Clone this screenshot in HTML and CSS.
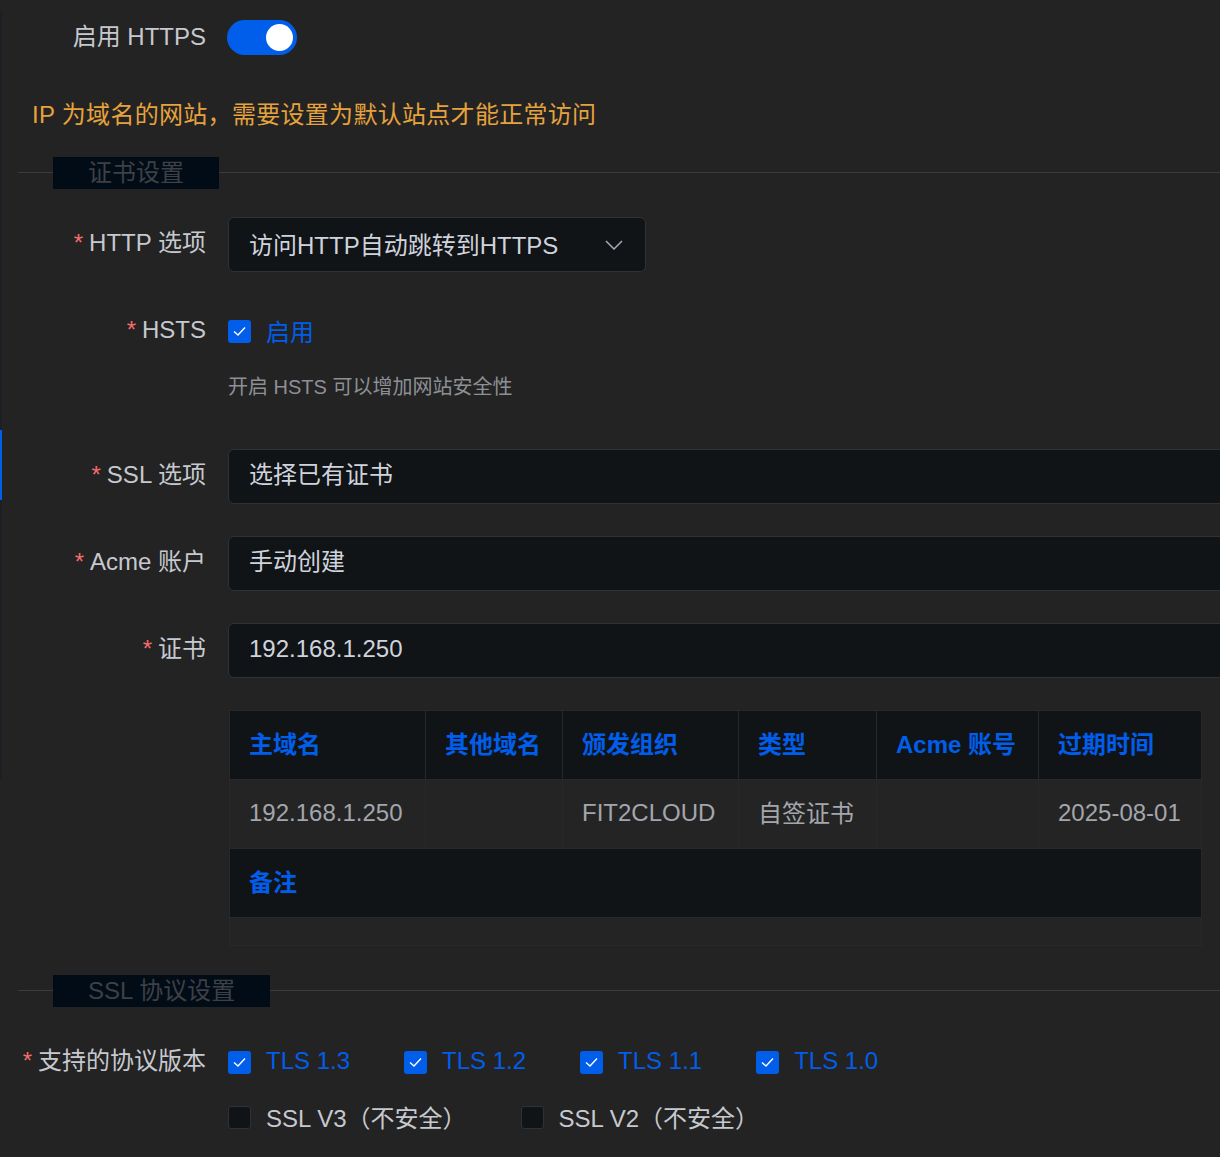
FILE: index.html
```html
<!DOCTYPE html>
<html lang="zh-CN">
<head>
<meta charset="utf-8"/>
<meta content="width=device-width, initial-scale=1.0" name="viewport"/>
<title>HTTPS 设置</title>
<link rel="stylesheet" href="styles.css">
</head>
<body>
<div class="page">
  <div class="rail"><span class="rail-active"></span></div>

  <div class="main">
    <div class="form-item form-item-first">
      <label class="form-label">启用 HTTPS</label>
      <div class="form-content">
        <span class="switch is-on"><span class="switch-knob"></span></span>
      </div>
    </div>

    <p class="warning">IP 为域名的网站，需要设置为默认站点才能正常访问</p>

    <div class="divider"><span class="divider-text">证书设置</span></div>

    <div class="form-item">
      <label class="form-label is-required">HTTP 选项</label>
      <div class="form-content">
        <div class="select">
          <span class="select-value">访问HTTP自动跳转到HTTPS</span>
          <svg class="select-arrow" width="18" height="10" viewBox="0 0 18 10"><path d="M1 1 L9 9 L17 1" fill="none" stroke="#a8abb2" stroke-width="1.5"/></svg>
        </div>
      </div>
    </div>

    <div class="form-item">
      <label class="form-label is-required">HSTS</label>
      <div class="form-content">
        <div class="check-line">
          <span class="checkbox is-checked">
            <svg width="23" height="23" viewBox="0 0 23 23"><path d="M6 11.5 L10 15 L17 7.5" fill="none" stroke="#fff" stroke-width="1.4"/></svg>
          </span>
          <span class="check-label is-checked">启用</span>
        </div>
        <div class="help">开启 HSTS 可以增加网站安全性</div>
      </div>
    </div>

    <div class="form-item">
      <label class="form-label is-required">SSL 选项</label>
      <div class="form-content">
        <div class="input">选择已有证书</div>
      </div>
    </div>

    <div class="form-item">
      <label class="form-label is-required">Acme 账户</label>
      <div class="form-content">
        <div class="input">手动创建</div>
      </div>
    </div>

    <div class="form-item">
      <label class="form-label is-required">证书</label>
      <div class="form-content">
        <div class="input">192.168.1.250</div>
      </div>
    </div>

    <div class="form-item form-item-table">
      <label class="form-label"></label>
      <div class="form-content">
        <table class="cert-table">
          <colgroup>
            <col style="width:196px"><col style="width:137px"><col style="width:176px">
            <col style="width:138px"><col style="width:162px"><col style="width:163px">
          </colgroup>
          <tr class="row-label">
            <th>主域名</th><th>其他域名</th><th>颁发组织</th><th>类型</th><th>Acme 账号</th><th>过期时间</th>
          </tr>
          <tr class="row-value">
            <td>192.168.1.250</td><td></td><td>FIT2CLOUD</td><td class="cell-cjk">自签证书</td><td></td><td>2025-08-01</td>
          </tr>
          <tr class="row-label">
            <th colspan="6">备注</th>
          </tr>
          <tr class="row-empty">
            <td colspan="6"></td>
          </tr>
        </table>
      </div>
    </div>

    <div class="divider"><span class="divider-text">SSL 协议设置</span></div>

    <div class="form-item form-item-auto">
      <label class="form-label is-required">支持的协议版本</label>
      <div class="form-content">
        <div class="check-group">
          <div class="check-line">
            <span class="checkbox is-checked"><svg width="23" height="23" viewBox="0 0 23 23"><path d="M6 11.5 L10 15 L17 7.5" fill="none" stroke="#fff" stroke-width="1.4"/></svg></span>
            <span class="check-label is-checked">TLS 1.3</span>
          </div>
          <div class="check-line">
            <span class="checkbox is-checked"><svg width="23" height="23" viewBox="0 0 23 23"><path d="M6 11.5 L10 15 L17 7.5" fill="none" stroke="#fff" stroke-width="1.4"/></svg></span>
            <span class="check-label is-checked">TLS 1.2</span>
          </div>
          <div class="check-line">
            <span class="checkbox is-checked"><svg width="23" height="23" viewBox="0 0 23 23"><path d="M6 11.5 L10 15 L17 7.5" fill="none" stroke="#fff" stroke-width="1.4"/></svg></span>
            <span class="check-label is-checked">TLS 1.1</span>
          </div>
          <div class="check-line">
            <span class="checkbox is-checked"><svg width="23" height="23" viewBox="0 0 23 23"><path d="M6 11.5 L10 15 L17 7.5" fill="none" stroke="#fff" stroke-width="1.4"/></svg></span>
            <span class="check-label is-checked">TLS 1.0</span>
          </div>
          <div class="check-break"></div>
          <div class="check-line">
            <span class="checkbox"></span>
            <span class="check-label">SSL V3（不安全）</span>
          </div>
          <div class="check-line">
            <span class="checkbox"></span>
            <span class="check-label">SSL V2（不安全）</span>
          </div>
        </div>
      </div>
    </div>
  </div>
</div>
</body>
</html>
```

FILE: styles.css
```css
html {
  overflow: hidden;
}
body {
  margin: 0;
  background-color: #232323;
  font-family: "Liberation Sans", "Noto Sans CJK SC", sans-serif;
  font-size: 24px;
  color: #c6c9cf;
}
.page {
  display: flex;
  align-items: flex-start;
  min-height: 1157px;
}
.rail {
  width: 2px;
  height: 770px;
  margin-top: 10px;
  background-color: #1c2025;
  flex-shrink: 0;
}
.rail-active {
  display: block;
  width: 2px;
  height: 70px;
  margin-top: 420px;
  background-color: #005eeb;
}
.main {
  flex: 1;
  padding-top: 10px;
  min-width: 0;
}

/* form rows */
.form-item {
  display: flex;
  margin-bottom: 32px;
}
.form-label {
  width: 204px;
  padding-right: 22px;
  flex-shrink: 0;
  text-align: right;
  line-height: 52px;
  height: 55px;
  color: #c6c9cf;
  white-space: nowrap;
}
.form-label.is-required::before {
  content: "*";
  color: #f56c6c;
  margin-right: 6px;
}
.form-content {
  flex: 1;
  min-width: 0;
}
.form-item-first {
  margin-bottom: 31px;
}
.form-item-first .form-label {
  line-height: 54px;
}
.form-item-table {
  margin-bottom: 29px;
}
.form-item-auto {
  margin-bottom: 0;
}

/* switch */
.switch {
  display: inline-flex;
  justify-content: flex-end;
  align-items: center;
  box-sizing: border-box;
  width: 70px;
  height: 35px;
  margin-top: 10px;
  margin-left: -1px;
  padding: 0 4px;
  border-radius: 18px;
  background-color: #005eeb;
}
.switch-knob {
  width: 27px;
  height: 27px;
  border-radius: 50%;
  background-color: #ffffff;
}

.warning {
  margin: 0 0 23px 30px;
  line-height: 37px;
  padding-bottom: 1px;
  color: #e6a23c;
  letter-spacing: 0.3px;
}

/* divider */
.divider {
  display: flex;
  align-items: center;
  margin: 0 0 28px 16px;
  height: 32px;
}
.divider::before {
  content: "";
  width: 35px;
  height: 1px;
  margin-top: -1px;
  background-color: #3a3c41;
}
.divider::after {
  content: "";
  flex: 1;
  height: 1px;
  margin-top: -1px;
  background-color: #3a3c41;
}
.divider-text {
  padding: 0 35px;
  line-height: 31px;
  height: 32px;
  background-color: #020c16;
  color: #3d4046;
}

/* select & input */
.select {
  display: flex;
  align-items: center;
  justify-content: space-between;
  box-sizing: border-box;
  width: 418px;
  height: 55px;
  padding: 0 22px 0 20px;
  background-color: #111417;
  border: 1px solid #2e3136;
  border-radius: 6px;
  color: #cfd3dc;
}
.select-value {
  margin-bottom: 3px;
}
.input {
  box-sizing: border-box;
  width: 1100px;
  height: 55px;
  line-height: 50px;
  padding: 0 20px;
  background-color: #111417;
  border: 1px solid #2e3136;
  border-radius: 6px;
  color: #cfd3dc;
}

/* checkbox */
.check-line {
  display: inline-flex;
  align-items: center;
  height: 55px;
  margin-right: 54px;
}
.checkbox {
  display: inline-block;
  box-sizing: border-box;
  width: 23px;
  height: 23px;
  border-radius: 3px;
  background-color: #111417;
  border: 1px solid #2e3136;
}
.checkbox.is-checked {
  background-color: #005eeb;
  border: none;
}
.checkbox svg {
  display: block;
}
.check-label {
  margin-left: 15px;
  margin-bottom: 3px;
  color: #c6c9cf;
}
.check-label.is-checked {
  color: #005eeb;
}
.check-group {
  display: flex;
  flex-wrap: wrap;
  width: 720px;
}
.check-break {
  flex-basis: 100%;
  height: 1px;
  margin-top: -1px;
}
.help {
  margin: 13px 0 15px;
  line-height: 30px;
  font-size: 20px;
  color: #8d9095;
}

/* certificate table */
.cert-table {
  border-collapse: collapse;
  table-layout: fixed;
  width: 972px;
  margin-left: 1px;
}
.cert-table th,
.cert-table td {
  box-sizing: border-box;
  padding: 0 19px 2px;
  text-align: left;
  white-space: nowrap;
  border: 1px solid #26282c;
}
.row-label th {
  height: 69px;
  padding-bottom: 5px;
  background-color: #111417;
  color: #005eeb;
  font-weight: bold;
}
.row-value td {
  height: 69px;
  background-color: #242424;
  color: #a3a6ad;
}
.row-value td.cell-cjk {
  padding-bottom: 5px;
}
.row-empty td {
  height: 28px;
  background-color: #242424;
}
```
